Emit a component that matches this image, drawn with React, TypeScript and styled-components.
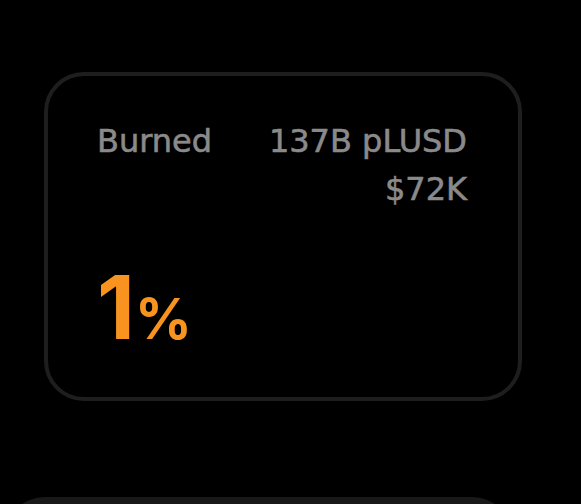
import styled, { createGlobalStyle } from "styled-components";

const GlobalStyle = createGlobalStyle`
   html, body {
      margin: 0;
      padding: 0;
      background: #000;
      overflow: hidden;
   }
   body {
      font-family: "DejaVu Sans", "Liberation Sans", sans-serif;
   }
`;

const Page = styled.div`
   display: flex;
   flex-direction: column;
   width: 581px;
   height: 504px;
   padding-top: 72px;
   box-sizing: border-box;
   overflow: hidden;
`;

const StatCard = styled.div`
   box-sizing: border-box;
   flex-shrink: 0;
   display: flex;
   flex-direction: column;
   justify-content: space-between;
   width: 478px;
   height: 329px;
   margin-left: 44px;
   padding: 41px 51px 34px 49px;
   border: 4px solid #1e1e1e;
   border-radius: 40px;
   background: #000;
`;

const NextCard = styled.div`
   flex-shrink: 0;
   width: 507px;
   height: 120px;
   margin: 96px 0 0 5px;
   border-radius: 40px;
   background: #191919;
`;

const Row = styled.div`
   display: flex;
   justify-content: space-between;
   align-items: flex-start;
`;

const Label = styled.span`
   font-size: 32px;
   line-height: 48px;
   color: #8a8a8a;
   -webkit-text-stroke: 0.6px #8a8a8a;
`;

const Amounts = styled.div`
   display: flex;
   flex-direction: column;
   align-items: flex-end;
`;

const Big = styled.div`
   font-family: Inter, "Liberation Sans", sans-serif;
   font-weight: 700;
   font-size: 88px;
   line-height: 88px;
   color: #f7931e;

   small {
      font-size: 56px;
   }
`;

const App = () => {
   return (
      <>
         <GlobalStyle />
         <Page>
            <StatCard>
               <Row>
                  <Label>Burned</Label>
                  <Amounts>
                     <Label>137B pLUSD</Label>
                     <Label>$72K</Label>
                  </Amounts>
               </Row>
               <Big>
                  1<small>%</small>
               </Big>
            </StatCard>
            <NextCard />
         </Page>
      </>
   );
};

export default App;
